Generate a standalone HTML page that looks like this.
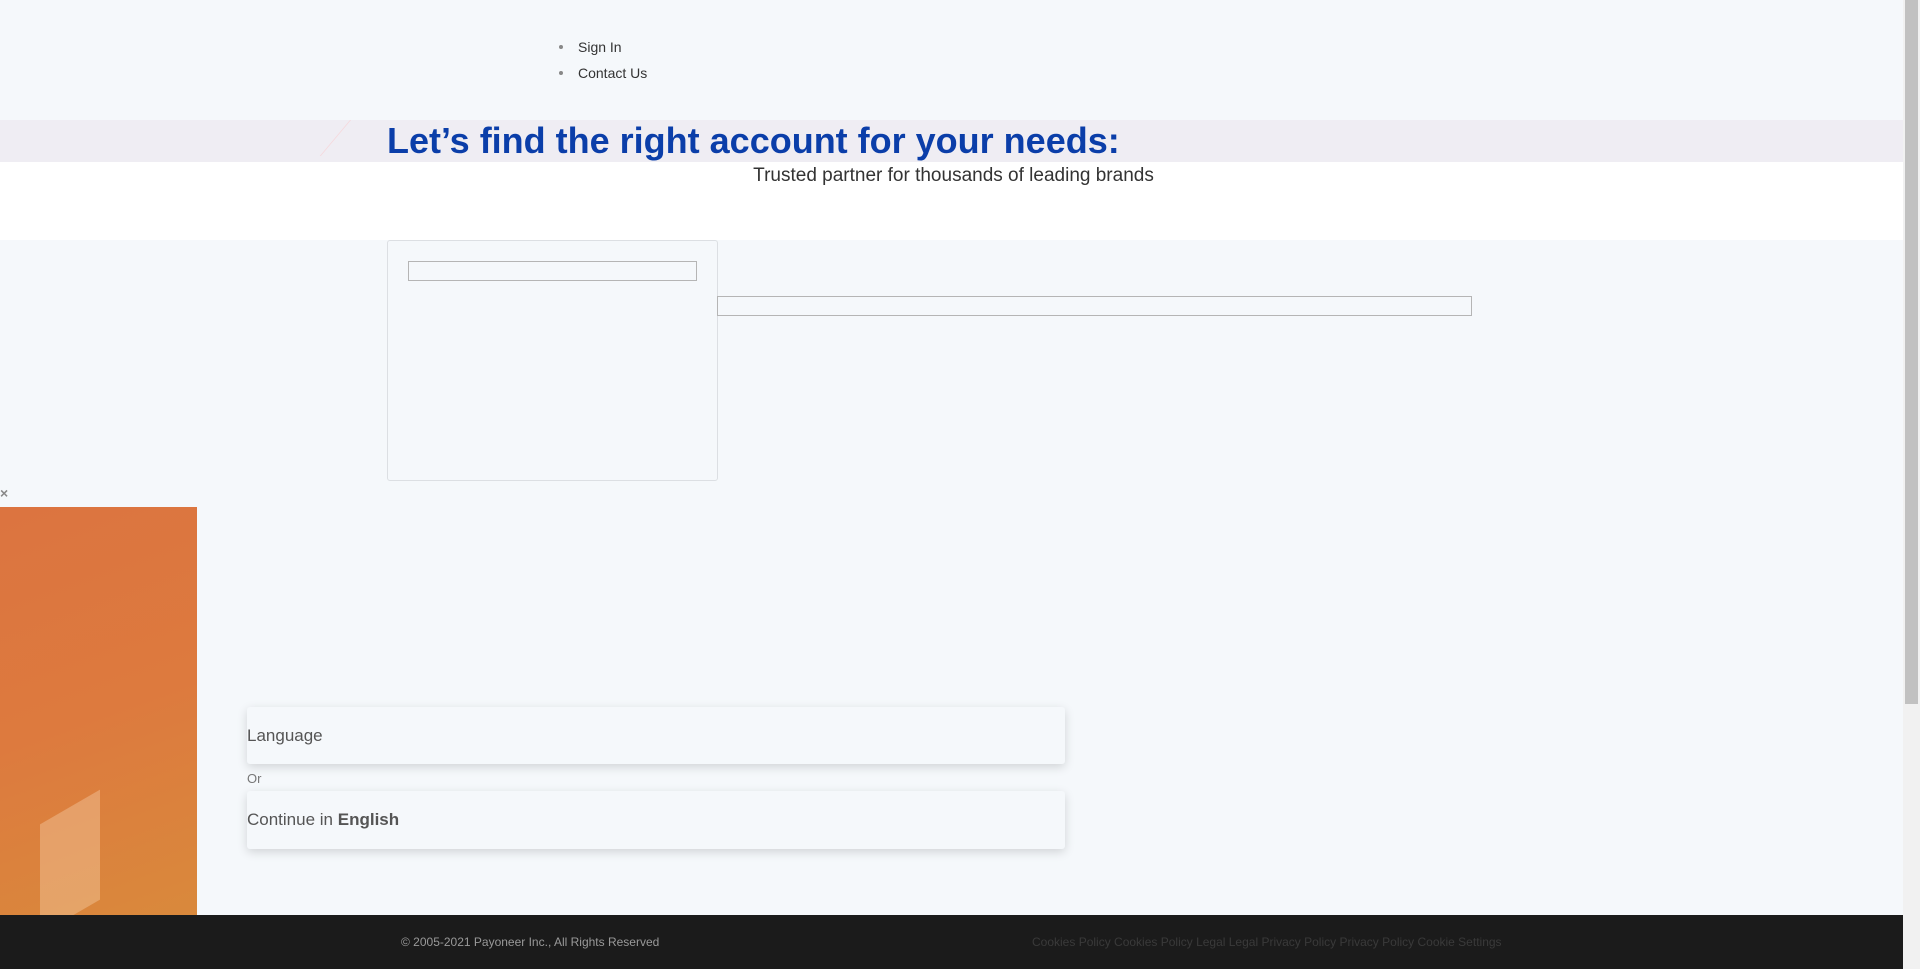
<!DOCTYPE html>
<html><head><style>
*{margin:0;padding:0;box-sizing:border-box}
body{width:1920px;height:969px;overflow:hidden;background:#f5f8fb;font-family:"Liberation Sans",sans-serif;position:relative}
.a{position:absolute}
</style></head><body>
<div class="a" style="left:0;top:0;width:1903px;height:120px;background:#f5f8fb"></div>
<div class="a" style="left:559px;top:45px;width:4px;height:4px;border-radius:50%;background:#888"></div>
<div class="a" style="left:578px;top:39px;font-size:14px;color:#333">Sign In</div>
<div class="a" style="left:559px;top:71px;width:4px;height:4px;border-radius:50%;background:#888"></div>
<div class="a" style="left:578px;top:65px;font-size:14px;color:#333">Contact Us</div>
<div class="a" style="left:0;top:120px;width:1903px;height:42px;background:#efedf3"></div>
<div class="a" style="left:350px;top:120px;width:1px;height:36px;background:#f6d8dc;transform:skewX(-40deg);transform-origin:top"></div>
<div class="a" style="left:387px;top:120px;font-size:36px;font-weight:bold;color:#0b3ea9;white-space:nowrap">Let’s find the right account for your needs:</div>
<div class="a" style="left:0;top:162px;width:1903px;height:78px;background:#fff"></div>
<div class="a" style="left:0;top:165px;width:1903px;text-align:center;font-size:19px;color:#333"><span style="position:relative;left:2px">Trusted partner for thousands of leading brands</span></div>
<div class="a" style="left:387px;top:240px;width:331px;height:241px;border:1px solid #dcdfe3;border-radius:3px"></div>
<div class="a" style="left:408px;top:261px;width:289px;height:20px;border:1px solid #b5b5b5"></div>
<div class="a" style="left:717px;top:296px;width:755px;height:20px;border:1px solid #b5b5b5"></div>
<div class="a" style="left:0;top:485px;font-size:14px;font-weight:bold;color:#888">×</div>
<div class="a" style="left:0;top:507px;width:197px;height:408px;background:linear-gradient(160deg,#dc7440 0%,#dd7a3e 50%,#d9893c 100%);overflow:hidden">
<div class="a" style="left:40px;top:300px;width:60px;height:110px;background:rgba(255,235,210,.3);transform:skewY(-30deg)"></div>
</div>
<div class="a" style="left:247px;top:707px;width:818px;height:57px;background:#f5f8fb;border-radius:3px;box-shadow:0 3px 10px rgba(0,0,0,.15)"></div>
<div class="a" style="left:247px;top:726px;font-size:17px;color:#555">Language</div>
<div class="a" style="left:247px;top:771px;font-size:13px;color:#777">Or</div>
<div class="a" style="left:247px;top:791px;width:818px;height:58px;background:#f5f8fb;border-radius:3px;box-shadow:0 3px 10px rgba(0,0,0,.15)"></div>
<div class="a" style="left:247px;top:810px;font-size:17px;color:#555">Continue in <b>English</b></div>
<div class="a" style="left:0;top:915px;width:1903px;height:54px;background:#1b1b1b"></div>
<div class="a" style="left:401px;top:935px;font-size:12px;color:#999">© 2005-2021 Payoneer Inc., All Rights Reserved</div>
<div class="a" style="left:1032px;top:935px;font-size:12px;color:#3a3a3a;white-space:nowrap">Cookies Policy Cookies Policy Legal Legal Privacy Policy Privacy Policy Cookie Settings</div>
<div class="a" style="left:1903px;top:0;width:17px;height:969px;background:#f1f1f1"></div>
<div class="a" style="left:1905px;top:0;width:13px;height:704px;background:#c1c1c1"></div>
</body></html>
